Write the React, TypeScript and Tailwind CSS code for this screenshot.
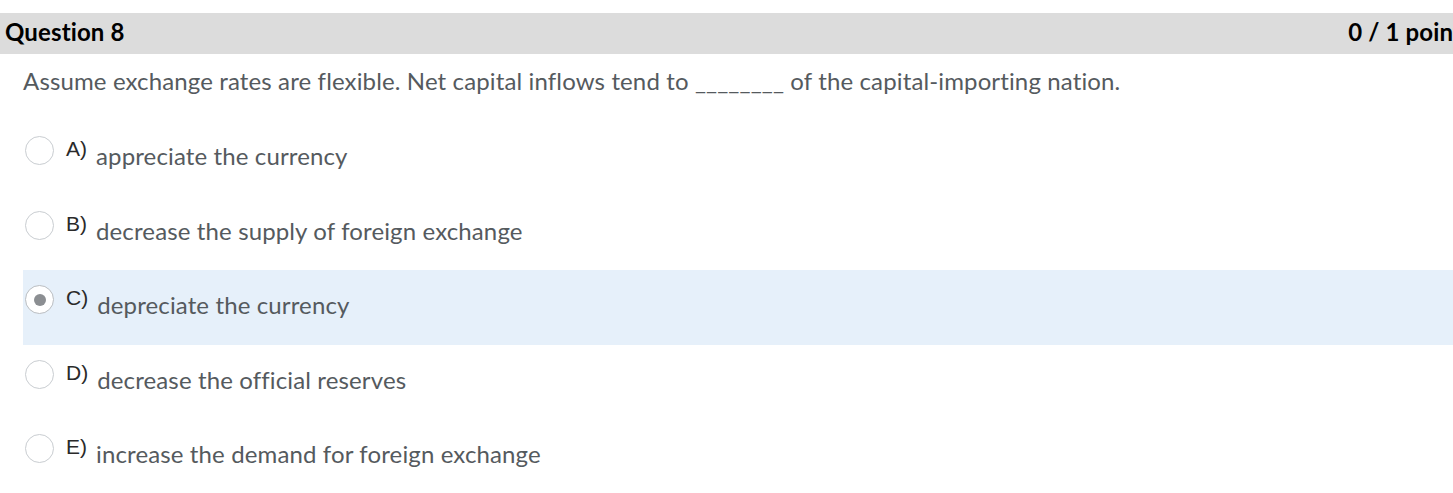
import React from 'react'

// Quiz question card: grey header, prompt, five radio options (C picked)

type Option = { letter: string; text: string; checked?: boolean }

const OPTIONS: Option[] = [
  { letter: 'A)', text: 'appreciate the currency' },
  { letter: 'B)', text: 'decrease the supply of foreign exchange' },
  { letter: 'C)', text: 'depreciate the currency', checked: true },
  { letter: 'D)', text: 'decrease the official reserves' },
  { letter: 'E)', text: 'increase the demand for foreign exchange' },
]

function Radio({ checked }: { checked?: boolean }) {
  return (
    <div
      className={
        'mt-[15px] ml-[2px] flex h-[29px] w-[29px] shrink-0 items-center justify-center rounded-full border bg-white ' +
        (checked ? 'border-[#b9bdc1]' : 'border-[#c9cdd1]')
      }
    >
      {checked && <div className="h-[12px] w-[12px] rounded-full bg-[#8b8e92]" />}
    </div>
  )
}

function OptionRow({ option }: { option: Option }) {
  return (
    <div
      className={
        'ml-[23px] flex h-[74.5px] items-start ' + (option.checked ? 'bg-[#e6f0fa]' : '')
      }
    >
      <Radio checked={option.checked} />
      <span className="mt-[17px] ml-[12px] font-['Liberation_Sans',sans-serif] text-[21px] leading-[21px] tracking-normal text-[#2a2a2a]">
        {option.letter}
      </span>
      <span className="mt-[23px] ml-[9px] text-[24px] leading-[24px] text-[#555a5e]">
        {option.text}
      </span>
    </div>
  )
}

export default function App() {
  return (
    <div className="h-[493px] w-[1453px] overflow-hidden bg-white pt-[13px] font-['Lato',sans-serif] tracking-[0.13px] [font-variant-ligatures:none]">
      <div className="flex h-[41px] w-[1462px] items-start justify-between bg-[#dcdcdc] pt-[7px] pl-[5px] text-[24px] leading-[24px] font-bold text-black">
        <span>Question 8</span>
        <span>0 / 1 point</span>
      </div>

      <p className="mt-[15px] ml-[23px] text-[24px] leading-[24px] text-[#555a5e]">
        Assume exchange rates are flexible. Net capital inflows tend to ________ of the capital-importing nation.
      </p>

      <div className="mt-[28px]">
        {OPTIONS.map((o) => (
          <OptionRow key={o.letter} option={o} />
        ))}
      </div>
    </div>
  )
}
